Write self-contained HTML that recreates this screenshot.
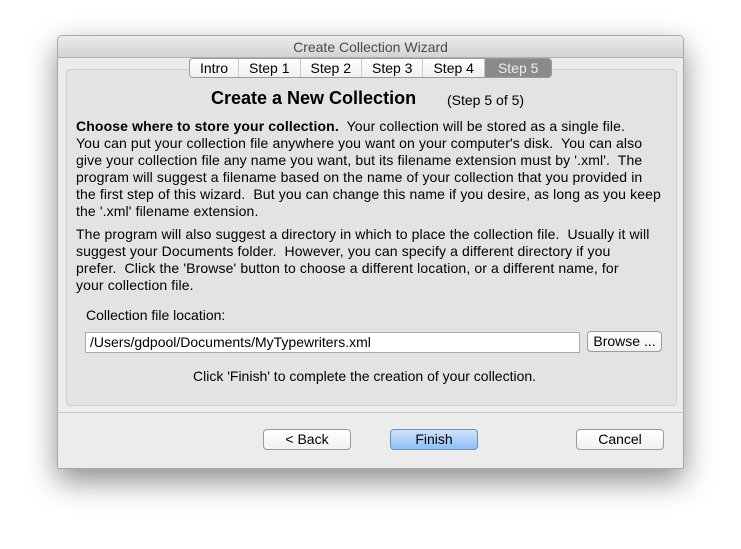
<!DOCTYPE html>
<html><head><meta charset="utf-8"><style>
*{margin:0;padding:0;box-sizing:border-box}
body{width:741px;height:549px;background:#fff;font-family:"Liberation Sans",sans-serif;color:#000;position:relative;overflow:hidden}
.win{position:absolute;left:57px;top:35px;width:627px;height:434px;background:#ececec;border:1px solid #a8a8a8;border-radius:5px 5px 2px 2px;box-shadow:0 12px 30px rgba(0,0,0,.45)}
.title{position:absolute;left:0;top:0;width:100%;height:22px;background:linear-gradient(#ececec,#d3d3d3);border-bottom:1px solid #b0b0b0;border-radius:5px 5px 0 0;text-align:center;font-size:14px;line-height:22px;color:#4a4a4a}
.panel{position:absolute;left:8px;top:33px;width:611px;height:337px;background:#e3e3e3;border:1px solid #cfcfcf;border-radius:4px}
.tabs{position:absolute;left:131px;top:22px;height:20px;display:flex;border:1px solid #9a9a9a;border-radius:4px;overflow:hidden;background:linear-gradient(#fff,#f0f0f0);font-size:14px;z-index:2}
.tabs div{padding:0 10px;line-height:18px;border-right:1px solid #c8c8c8;height:18px}
.tabs div.sel{background:#8a8a8a;color:#eee;border-right:none;padding:0 13px}
.t{position:absolute;white-space:nowrap;font-size:14px}
.p{position:absolute;left:18px;font-size:14px;line-height:17px;white-space:nowrap;letter-spacing:0.12px}
.field{position:absolute;left:27px;top:296px;width:495px;height:21px;background:#fff;border:1px solid #aaa;font-size:14px;line-height:19px;padding-left:4px}
.btn{position:absolute;height:21px;border:1px solid #9b9b9b;border-radius:4px;background:linear-gradient(#fff,#f1f1f1);font-size:14px;text-align:center;line-height:19px}
.blue{background:linear-gradient(#cfe3fb,#8ec0f5);border-color:#6e8fb8}
</style></head><body>
<div class="win">
<div class="title">Create Collection Wizard</div>
<div class="tabs"><div>Intro</div><div>Step 1</div><div>Step 2</div><div>Step 3</div><div>Step 4</div><div class="sel">Step 5</div></div>
<div class="panel"></div>
<div class="t" style="left:153px;top:52px;font-size:18px;font-weight:bold">Create a New Collection</div>
<div class="t" style="left:389px;top:56px">(Step 5 of 5)</div>
<div class="p" style="top:82px"><b>Choose where to store your collection.</b>&nbsp; Your collection will be stored as a single file.<br>You can put your collection file anywhere you want on your computer's disk.&nbsp; You can also<br>give your collection file any name you want, but its filename extension must by '.xml'.&nbsp; The<br>program will suggest a filename based on the name of your collection that you provided in<br>the first step of this wizard.&nbsp; But you can change this name if you desire, as long as you keep<br>the '.xml' filename extension.</div>
<div class="p" style="top:190px">The program will also suggest a directory in which to place the collection file.&nbsp; Usually it will<br>suggest your Documents folder.&nbsp; However, you can specify a different directory if you<br>prefer.&nbsp; Click the 'Browse' button to choose a different location, or a different name, for<br>your collection file.</div>
<div class="t" style="left:28px;top:271px">Collection file location:</div>
<div class="field">/Users/gdpool/Documents/MyTypewriters.xml</div>
<div class="btn" style="left:529px;top:295px;width:75px">Browse ...</div>
<div class="t" style="left:135px;top:332px">Click 'Finish' to complete the creation of your collection.</div>
<div style="position:absolute;left:0;top:376px;width:100%;border-top:1px solid #c9c9c9"></div>
<div class="btn" style="left:205px;top:393px;width:88px">&lt; Back</div>
<div class="btn blue" style="left:332px;top:393px;width:88px">Finish</div>
<div class="btn" style="left:518px;top:393px;width:88px">Cancel</div>
</div>
</body></html>
